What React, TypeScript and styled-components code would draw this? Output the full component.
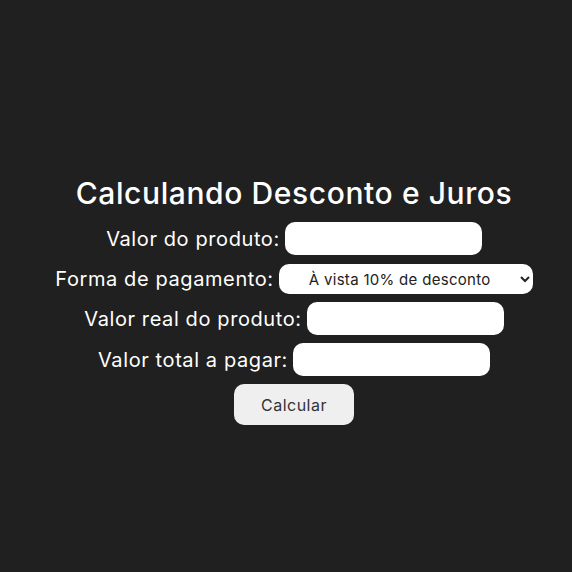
import React from 'react';
import styled, { createGlobalStyle } from 'styled-components';

const GlobalStyle = createGlobalStyle`
  html, body {
    margin: 0;
    padding: 0;
    background: #202020;
  }

  body {
    font-family: Inter, 'Liberation Sans', sans-serif;
    color: #ffffff;
  }
`;

const Page = styled.main`
  min-height: 100vh;
  box-sizing: border-box;
  padding: 173px 0 0 16px;
  display: flex;
  flex-direction: column;
  align-items: center;
`;

const Title = styled.h1`
  margin: 0;
  font-size: 30px;
  font-weight: 500;
  line-height: 40px;
  letter-spacing: 0.6px;
`;

const Form = styled.form`
  margin-top: 9px;
  display: flex;
  flex-direction: column;
  align-items: center;
  gap: 8px;
`;

const Row = styled.div`
  display: flex;
  align-items: center;
  justify-content: center;
  gap: 5px;
`;

const Label = styled.label`
  font-size: 20px;
  font-weight: 400;
  letter-spacing: 0.6px;
`;

const TextInput = styled.input`
  width: 197px;
  height: 33px;
  box-sizing: border-box;
  border: none;
  border-radius: 10px;
  background: #ffffff;
  padding: 0 10px;
  font-family: inherit;
  font-size: 15px;
  outline: none;
`;

const Select = styled.select`
  width: 254px;
  height: 30px;
  margin-top: 1px;
  box-sizing: border-box;
  border: none;
  border-radius: 10px;
  background: #ffffff;
  color: #222;
  font-family: inherit;
  font-size: 15px;
  letter-spacing: 0.3px;
  text-align: center;
  padding: 0 4px;
`;

const Button = styled.button`
  width: 120px;
  height: 41px;
  border: none;
  border-radius: 10px;
  background: #efefef;
  color: #333;
  font-family: inherit;
  font-size: 16px;
  letter-spacing: 0.5px;
  cursor: pointer;
`;

export default function App() {
  return (
    <>
      <GlobalStyle />
      <Page>
        <Title>Calculando Desconto e Juros</Title>
        <Form onSubmit={(e) => e.preventDefault()}>
          <Row>
            <Label htmlFor="valor">Valor do produto:</Label>
            <TextInput id="valor" type="text" />
          </Row>
          <Row>
            <Label htmlFor="forma">Forma de pagamento:</Label>
            <Select id="forma" defaultValue="avista">
              <option value="avista">À vista 10% de desconto</option>
              <option value="cartao">Cartão 5% de desconto</option>
              <option value="2x">Em até 2x sem juros</option>
              <option value="3x">3x ou mais com 20% de juros</option>
            </Select>
          </Row>
          <Row>
            <Label htmlFor="real">Valor real do produto:</Label>
            <TextInput id="real" type="text" readOnly />
          </Row>
          <Row>
            <Label htmlFor="total">Valor total a pagar:</Label>
            <TextInput id="total" type="text" readOnly />
          </Row>
          <Button type="submit">Calcular</Button>
        </Form>
      </Page>
    </>
  );
}
